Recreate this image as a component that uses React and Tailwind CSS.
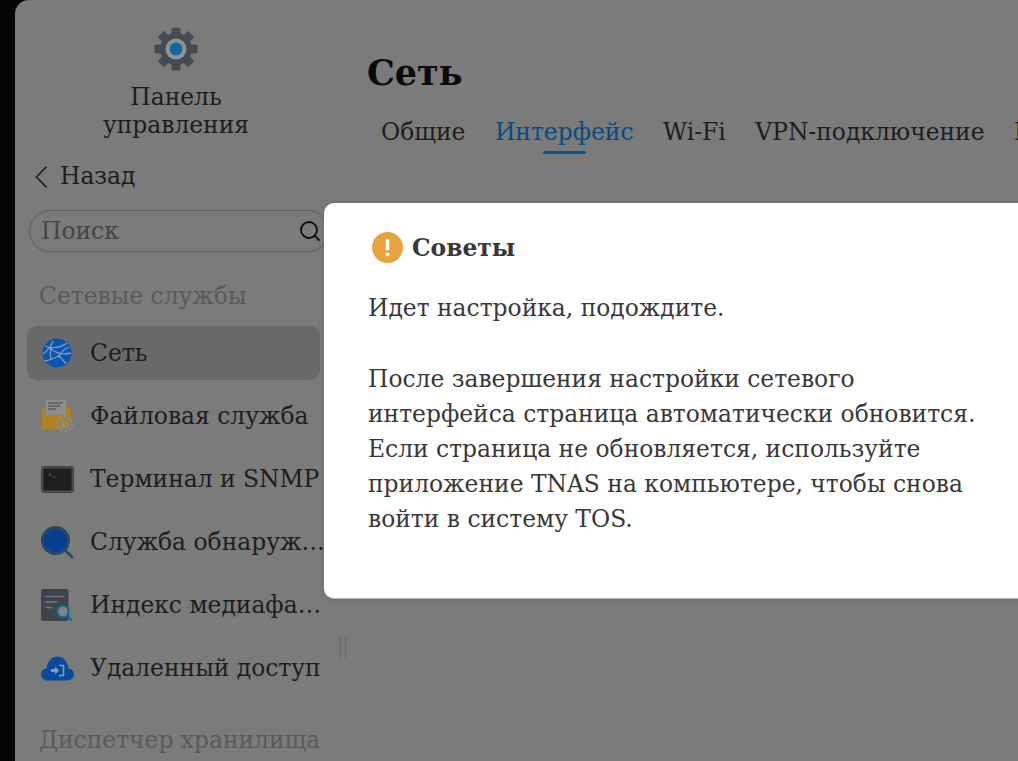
import React from "react";
import { Search } from "lucide-react";

const serif = "font-['DejaVu_Serif',serif]";

function Gear() {
  const teeth = [0, 45, 90, 135, 180, 225, 270, 315];
  return (
    <svg width="44" height="44" viewBox="0 0 44 44">
      {teeth.map((a) => (
        <rect key={a} x="17.5" y="0.5" width="9" height="10" rx="1.5" fill="#454b52" transform={`rotate(${a} 22 22)`} />
      ))}
      <circle cx="22" cy="22" r="16" fill="#454b52" />
      <circle cx="22" cy="22" r="10.5" fill="#8f9398" />
      <circle cx="22" cy="22" r="6.5" fill="#0f679c" />
    </svg>
  );
}

function Globe() {
  return (
    <svg width="30" height="30" viewBox="0 0 30 30">
      <circle cx="15" cy="15" r="14.5" fill="#0b55ae" />
      <g fill="none" stroke="#7f9ac0" strokeWidth="1.300">
        <path d="M3 8c6 3 16 2 22-3" />
        <path d="M1 16c5-4 8-7 10-13" />
        <path d="M9 11c5 4 12 6 20 4" />
        <path d="M3 23c6-1 10-3 14-5 3 3 6 6 7 8" />
        <path d="M17 18c2-4 5-7 10-9" />
        <path d="M9 11c-1 3-1 6 0 10" />
      </g>
      <circle cx="17" cy="18" r="1.500" fill="#7f9ac0" />
      <circle cx="9" cy="11" r="1.300" fill="#7f9ac0" />
    </svg>
  );
}

function FileIcon() {
  return (
    <svg width="32" height="34" viewBox="0 0 32 34">
      <path d="M1 9.5h29V29a1.5 1.5 0 0 1-1.5 1.5H2.500A1.500 1.500 0 0 1 1 29z" fill="#ad8420" />
      <rect x="5" y="1" width="20" height="15" fill="#8d8d8d" />
      <path d="M1 12h4v5h20v-5h5v6H1z" fill="#ad8420" />
      <path d="M7 4h15M7 7h12M7 10h8" stroke="#444" strokeWidth="1" />
      <circle cx="24" cy="25" r="6.500" fill="none" stroke="#8b8b8b" strokeWidth="3.500" strokeDasharray="2.500 1.500" />
      <circle cx="24" cy="25" r="5" fill="#a58a41" stroke="#7f7f7f" strokeWidth="1.500" />
    </svg>
  );
}

function TerminalIcon() {
  return (
    <svg width="33" height="27" viewBox="0 0 33 27">
      <rect x="0.500" y="0.500" width="32" height="26" rx="2" fill="#4d4d4d" stroke="#444" />
      <rect x="2.500" y="2.500" width="28" height="22" fill="#1e1e1e" />
      <path d="M8 7l2 1.500-2 1.500" fill="none" stroke="#1e8f86" strokeWidth="0.900" />
      <path d="M11 11h3" stroke="#226a66" strokeWidth="0.900" />
    </svg>
  );
}

function DiscoverIcon() {
  return (
    <svg width="33" height="33" viewBox="0 0 33 33">
      <circle cx="14.500" cy="14.500" r="13" fill="#053f92" stroke="#2d4560" strokeWidth="3" />
      <path d="M24 24l7 7" stroke="#2b4a68" strokeWidth="3" strokeLinecap="round" />
    </svg>
  );
}

function IndexIcon() {
  return (
    <svg width="32" height="33" viewBox="0 0 32 33">
      <rect x="0" y="0" width="27.500" height="32" rx="2" fill="#3f444a" />
      <path d="M4.500 7.500h19M4.500 13h12M4.500 18.500h7" stroke="#74777b" strokeWidth="1.300" />
      <circle cx="22" cy="22.500" r="5.800" fill="#7f8488" stroke="#0f6b87" strokeWidth="2" />
      <path d="M26.500 27l4 4.500" stroke="#0f6b87" strokeWidth="2" />
    </svg>
  );
}

function CloudIcon() {
  return (
    <svg width="33" height="25" viewBox="0 0 33 25">
      <path d="M7 24.500C3 24.500 0 22 0 18.500c0-3 2-5.500 5.500-6C6.500 5 11 .5 16.500.5s10 4.500 11 12c3 .5 5.500 3 5.500 6 0 3.500-3 6-7 6z" fill="#0a4a9e" />
      <path d="M10 13h4v-2.500l4 4-4 4V16h-4z" fill="#8f9aa8" />
      <path d="M18 9.500h4.500v10H18" fill="none" stroke="#8f9aa8" strokeWidth="1.500" />
    </svg>
  );
}

const items = [
  ["Сеть", <Globe />, true],
  ["Файловая служба", <FileIcon />],
  ["Терминал и SNMP", <TerminalIcon />],
  ["Служба обнаружения", <DiscoverIcon />],
  ["Индекс медиафайлов", <IndexIcon />],
  ["Удаленный доступ", <CloudIcon />],
];

export default function App() {
  return (
    <div className={`relative w-[1018px] h-[761px] overflow-hidden bg-[#050505] pl-[15px] ${serif}`}>
      <div className="flex h-[780px] w-[1100px] rounded-tl-[14px] bg-[#7b7b7b]">
        <aside className="relative w-[325px] shrink-0 pt-[27px] text-[#1d1d1d]">
          <div className="flex flex-col items-center pr-[3px]">
            <Gear />
            <div className="mt-[12px] text-center text-[23.4px] leading-[28px] w-[160px]">Панель управления</div>
          </div>
          <div className="mt-[20px] ml-[20px] flex h-[36px] items-center gap-[13px] text-[23.4px]">
            <svg width="12" height="24" viewBox="0 0 12 24">
              <path d="M11.500 1.500L1.500 12l10 10.500" fill="none" stroke="#1d1d1d" strokeWidth="1.600" />
            </svg>
            <span>Назад</span>
          </div>
          <div className="mt-[15px] ml-[14px] flex h-[42px] w-[300px] items-center justify-between rounded-full border border-[#5f5f5f] pl-[11px] pr-[6px] text-[23.4px] text-[#454545]">
            <span className="pt-[1px]">Поиск</span>
            <Search size={24} strokeWidth={1.8} className="text-[#0c0c0c]" />
          </div>
          <div className="mt-[26px] ml-[24px] text-[23.4px] leading-[36px] text-[#5a5a5a]">Сетевые службы</div>
          <div className="mt-[12px] ml-[12px] flex w-[293px] flex-col gap-[9px]">
            {items.map(([label, icon, active]) => (
              <div key={label} className={`flex h-[54px] items-center rounded-[10px] ${active ? "bg-[#696969]" : ""}`}>
                <div className="flex w-[63px] shrink-0 justify-center pr-[3px]">{icon}</div>
                <span className="w-[235px] shrink-0 truncate text-[23.4px] leading-[30px]">{label}</span>
              </div>
            ))}
          </div>
          <div className="mt-[27px] ml-[24px] text-[23.4px] leading-[36px] text-[#5a5a5a]">Диспетчер хранилища</div>
          <div className="absolute left-[325px] top-[636px] h-[23px] w-[6px] border-x border-[#6a6a6a]" />
        </aside>
        <main className="pl-[27px] pt-[49px] text-[#1d1d1d]">
          <h1 className="text-[35px] font-bold leading-[48px] text-[#0b0b0b]">Сеть</h1>
          <nav className="mt-[17px] flex gap-[29.500px] pl-[14px] text-[23.4px] leading-[36px] whitespace-nowrap">
            <span>Общие</span>
            <span className="relative text-[#064c82]">
              Интерфейс
              <span className="absolute bottom-[-4px] left-[48px] h-[3px] w-[43px] rounded-full bg-[#08558e]" />
            </span>
            <span>Wi-Fi</span>
            <span>VPN-подключение</span>
            <span>Прокси</span>
          </nav>
        </main>
      </div>
      <div className="absolute left-[324px] top-[203px] h-[396px] w-[720px] rounded-[10px] border-b border-[#b5b5b5] bg-white pl-[44px] pt-[28px] text-[#383838] shadow-[0_0_6px_rgba(0,0,0,0.15)]">
        <div className="flex items-center gap-[9px]">
          <svg width="31" height="31" viewBox="0 0 31 31" className="ml-[4px]">
            <circle cx="15.500" cy="15.500" r="15.500" fill="#e8a33d" />
            <rect x="13.700" y="7" width="3.600" height="11.500" rx="1.800" fill="#fff" />
            <circle cx="15.500" cy="22.500" r="2" fill="#fff" />
          </svg>
          <h2 className="mt-[1px] text-[23.4px] font-bold leading-[32px]">Советы</h2>
        </div>
        <p className="mt-[27px] w-[620px] text-[23.4px] leading-[35px]">Идет настройка, подождите.</p>
        <p className="mt-[36px] w-[620px] text-[23.4px] leading-[35px]">
          После завершения настройки сетевого интерфейса страница автоматически обновится. Если страница не обновляется, используйте приложение TNAS на компьютере, чтобы снова войти в систему TOS.
        </p>
      </div>
    </div>
  );
}
